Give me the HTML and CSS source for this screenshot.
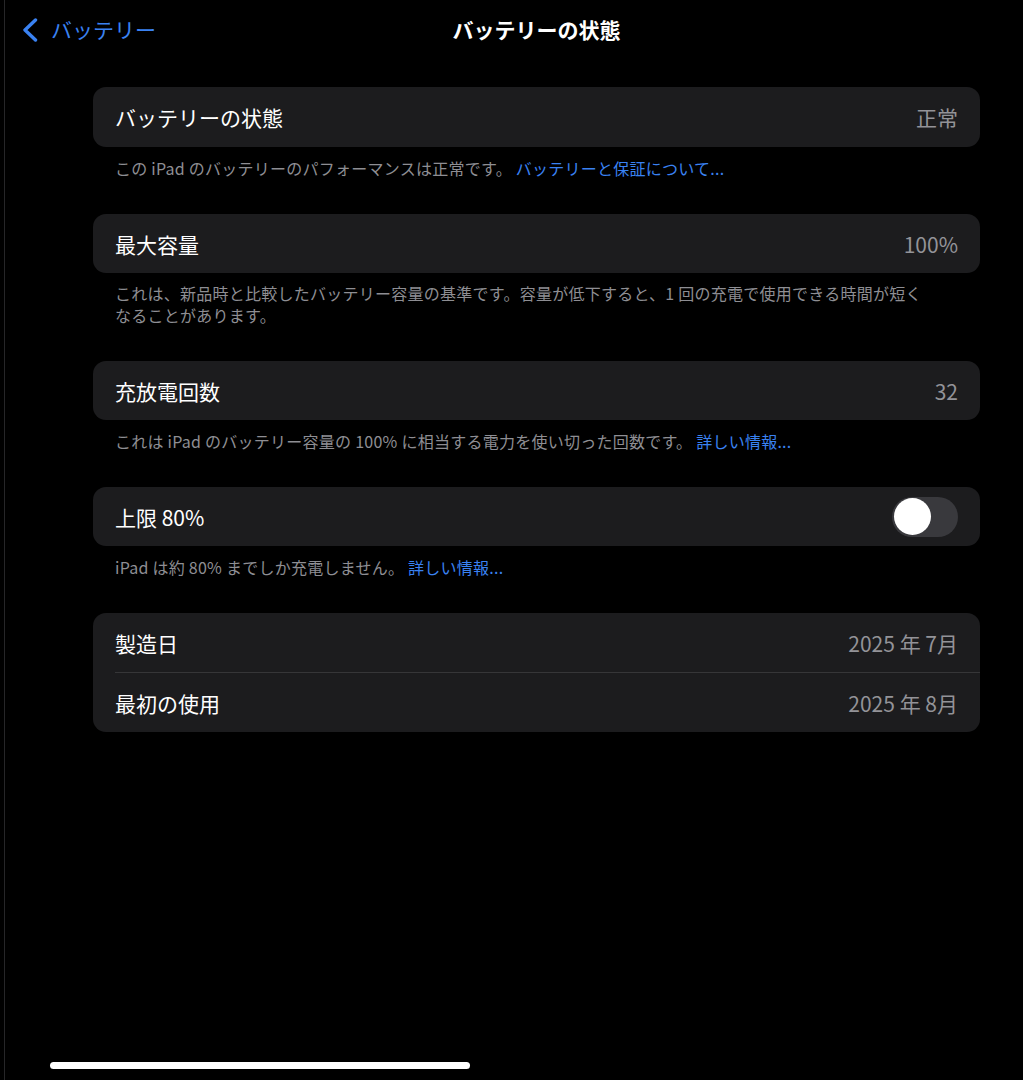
FILE: index.html
```html
<!DOCTYPE html>
<html lang="ja">
<head>
<meta charset="utf-8">
<title>バッテリーの状態</title>
<link rel="stylesheet" href="styles.css">
</head>
<body>
<div class="screen">
  <header class="nav">
    <a class="back">
      <svg class="chev" width="16" height="24" viewBox="0 0 16 24"><path d="M13.5 2 L3 12 L13.5 22" fill="none" stroke="currentColor" stroke-width="3.4" stroke-linecap="round" stroke-linejoin="round"/></svg>
      <span>バッテリー</span>
    </a>
    <h1 class="title">バッテリーの状態</h1>
  </header>

  <main class="content">
    <section class="group">
      <div class="card">
        <div class="row"><span class="label">バッテリーの状態</span><span class="value">正常</span></div>
      </div>
      <p class="note">この iPad のバッテリーのパフォーマンスは正常です。 <a class="link">バッテリーと保証について...</a></p>
    </section>

    <section class="group">
      <div class="card">
        <div class="row"><span class="label">最大容量</span><span class="value">100%</span></div>
      </div>
      <p class="note multi">これは、新品時と比較したバッテリー容量の基準です。容量が低下すると、1 回の充電で使用できる時間が短く<br>なることがあります。</p>
    </section>

    <section class="group">
      <div class="card">
        <div class="row"><span class="label">充放電回数</span><span class="value">32</span></div>
      </div>
      <p class="note">これは iPad のバッテリー容量の 100% に相当する電力を使い切った回数です。 <a class="link">詳しい情報...</a></p>
    </section>

    <section class="group">
      <div class="card">
        <div class="row"><span class="label">上限 80%</span><span class="switch"><span class="knob"></span></span></div>
      </div>
      <p class="note">iPad は約 80% までしか充電しません。 <a class="link">詳しい情報...</a></p>
    </section>

    <section class="group">
      <div class="card">
        <div class="row"><span class="label">製造日</span><span class="value">2025 年 7月</span></div>
        <div class="sep"></div>
        <div class="row"><span class="label">最初の使用</span><span class="value">2025 年 8月</span></div>
      </div>
    </section>
  </main>

  <div class="home"></div>
</div>
</body>
</html>
```
FILE: styles.css
```css
html, body {
  margin: 0;
  padding: 0;
  background: #000;
}
body {
  font-family: "Noto Sans CJK JP", "Noto Sans", sans-serif;
  color: #fff;
}
.screen {
  margin-left: 4px;
  border-left: 1px solid #262628;
  min-height: 1080px;
  box-sizing: border-box;
  display: flex;
  flex-direction: column;
}
.nav {
  height: 59px;
  display: grid;
  grid-template-columns: 88px 887px;
  align-items: center;
}
.back {
  grid-row: 1;
  grid-column: 1 / 3;
  justify-self: start;
  display: flex;
  align-items: center;
  margin-left: 17px;
  color: #3a82f2;
  font-size: 21px;
  line-height: 1;
}
.chev {
  display: block;
  margin-right: 13px;
}
.title {
  grid-row: 1;
  grid-column: 2;
  justify-self: center;
  margin: 0;
  font-size: 21px;
  font-weight: 700;
  line-height: 1;
}
.content {
  padding-top: 28px;
  padding-left: 88px;
  width: 887px;
  display: flex;
  flex-direction: column;
  gap: 35px;
}
.card {
  background: #1c1c1e;
  border-radius: 13px;
  overflow: hidden;
}
.row {
  height: 59px;
  display: flex;
  align-items: center;
  justify-content: space-between;
  padding: 0 22px;
}
.group:first-child .row {
  height: 60px;
}
.label {
  font-size: 21px;
  color: #fff;
}
.value {
  font-size: 21px;
  color: #939398;
}
.sep {
  height: 1px;
  background: #363638;
  margin-left: 22px;
}
.note {
  margin: 0;
  padding: 10px 40px 0 22px;
  font-size: 16px;
  line-height: 22px;
  letter-spacing: 0.25px;
  color: #8e8e93;
}
.note.multi {
  padding-top: 9px;
}
.link {
  color: #3a82f2;
}
.switch {
  width: 66px;
  height: 40px;
  border-radius: 20px;
  background: #39393d;
  display: flex;
  align-items: center;
  padding: 0 2px;
  box-sizing: border-box;
}
.knob {
  width: 37px;
  height: 37px;
  border-radius: 50%;
  background: #fff;
}
.home {
  margin-top: auto;
  margin-left: 45px;
  margin-bottom: 11px;
  width: 420px;
  height: 7px;
  border-radius: 4px;
  background: #fff;
}
```
